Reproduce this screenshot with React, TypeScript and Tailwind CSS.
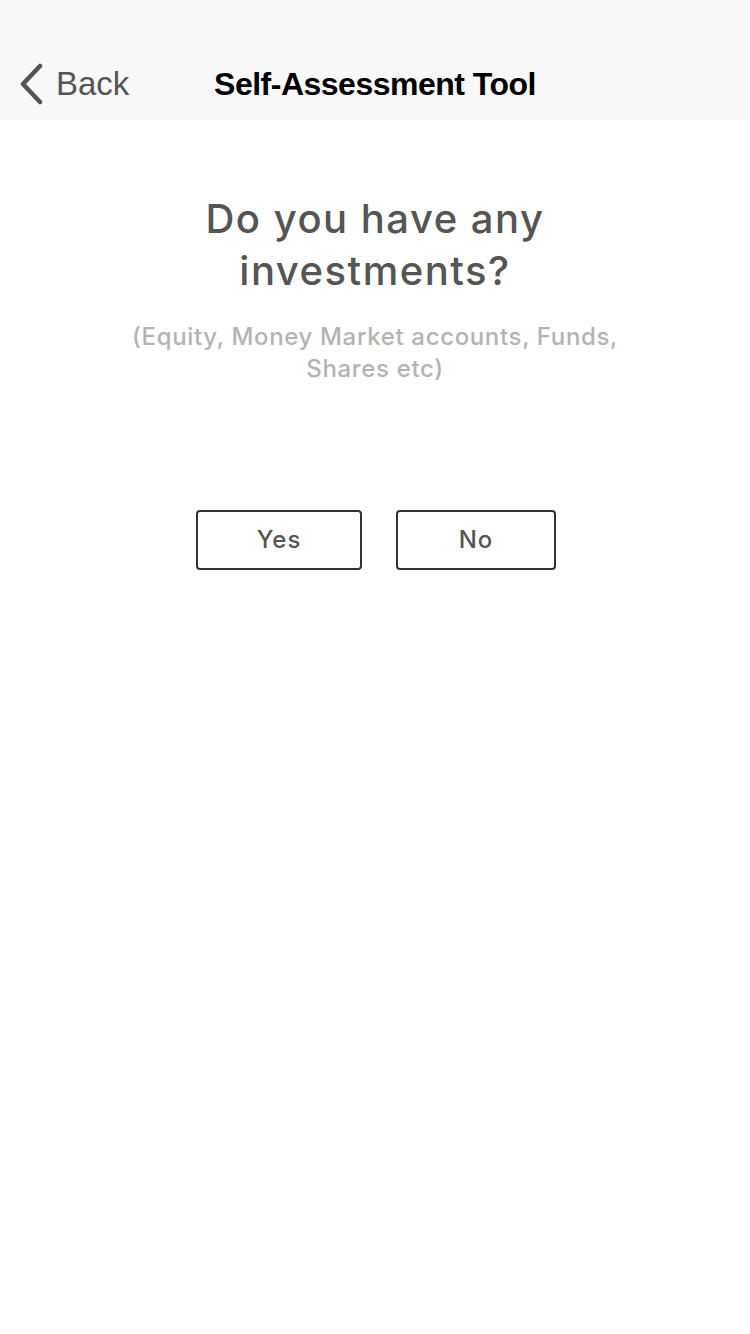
import React from "react";

export default function App() {
  return (
    <div className="w-[750px] min-h-[1334px] bg-white" style={{ fontFamily: '"Liberation Sans", Arial, sans-serif' }}>
      <header className="h-[120px] bg-[#f8f8f8] grid grid-cols-[1fr_auto_1fr] items-end pb-[16px]">
        <div className="h-[40px] flex items-center pl-[18px]">
          <svg width="26" height="42" viewBox="0 0 26 42" className="mr-[12px]">
            <path d="M22 3 L5 21 L22 39" fill="none" stroke="#555555" strokeWidth="4.5" strokeLinecap="round" strokeLinejoin="round" />
          </svg>
          <span className="text-[33px] leading-[40px] text-[#555555]">Back</span>
        </div>
        <h1 className="text-[32px] leading-[40px] font-bold text-black tracking-[-0.5px]">Self-Assessment Tool</h1>
        <div />
      </header>
      <main className="flex flex-col items-center pt-[73px]" style={{ fontFamily: 'Inter, "Liberation Sans", sans-serif' }}>
        <h2 className="text-[40px] leading-[52px] font-medium tracking-[1.5px] text-[#555555] text-center">
          Do you have any
          <br />
          investments?
        </h2>
        <p className="mt-[24px] text-[24px] leading-[32px] font-medium tracking-[0.65px] text-[#b3b3b3] text-center">
          (Equity, Money Market accounts, Funds,
          <br />
          Shares etc)
        </p>
        <div className="mt-[125px] flex gap-[34px] pl-[2px]">
          <button className="w-[166px] h-[60px] border-2 border-[#333333] rounded-[4px] text-[24px] font-medium tracking-[1px] text-[#555555]">Yes</button>
          <button className="w-[160px] h-[60px] border-2 border-[#333333] rounded-[4px] text-[24px] font-medium tracking-[1px] text-[#555555]">No</button>
        </div>
      </main>
    </div>
  );
}
